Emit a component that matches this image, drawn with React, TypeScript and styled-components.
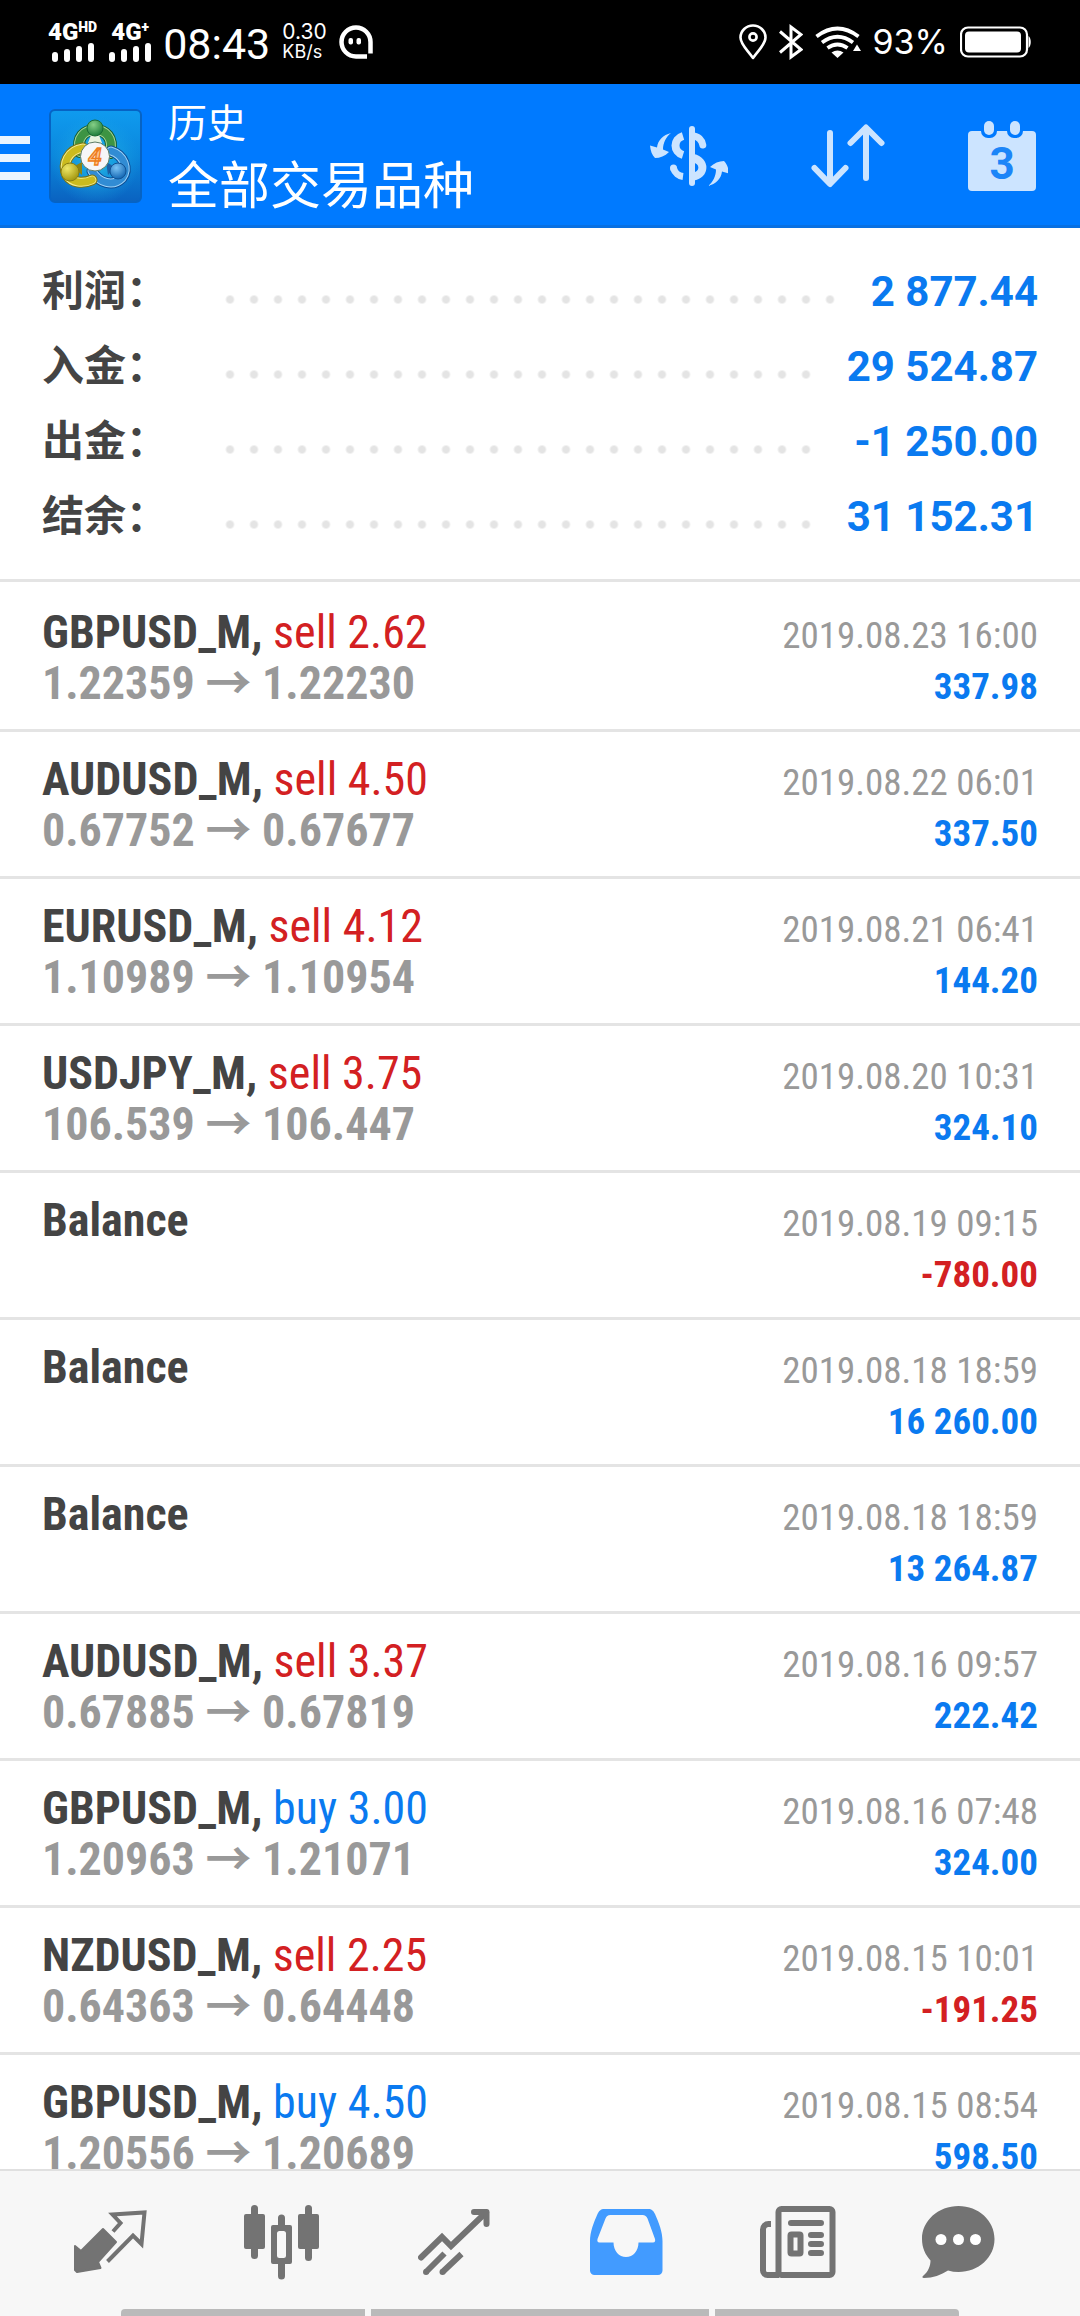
import React from "react";
import styled, { createGlobalStyle } from "styled-components";

const BLUE = "#007aff";
const VALUE_BLUE = "#0a7af0";
const RED = "#d32022";
const INK = "#444444";
const GREY = "#999999";
const RULE = "#e4e4e4";
const ICON_TINT = "#cce4ff";
const NAV_ICON = "#737373";
const ROBOTO = '"Roboto", "Noto Sans CJK SC", sans-serif';
const CONDENSED = '"Roboto Condensed", "Roboto", "Noto Sans CJK SC", sans-serif';

const GlobalStyle = createGlobalStyle`
  * { box-sizing: border-box; }
  body {
    margin: 0;
    background: #ffffff;
    color: ${INK};
    font-family: ${ROBOTO};
  }
  h1, p, dl, dt, dd, ul { margin: 0; padding: 0; font-weight: inherit; }
  ul { list-style: none; }
  button { border: 0; padding: 0; background: none; color: inherit; font: inherit; cursor: pointer; }
  svg { display: block; flex: none; }
`;

const Screen = styled.div`
  display: flex;
  flex-direction: column;
  height: 100vh;
  overflow: hidden;
`;

/* ---------- status bar ---------- */

const StatusBar = styled.div`
  display: flex;
  justify-content: space-between;
  align-items: center;
  flex: none;
  height: 84px;
  padding: 0 48px;
  background: #000000;
  color: #ffffff;
`;

const StatusGroup = styled.div`
  display: flex;
  align-items: center;
  gap: 12px;
`;

const Signal = styled.div`
  display: flex;
  flex-direction: column;
  align-items: center;
`;

const SignalLabel = styled.span`
  display: flex;
  align-items: flex-start;
  height: 20px;
  font-size: 24px;
  font-weight: 900;
  line-height: 20px;
`;

const SignalMark = styled.span`
  font-size: 14px;
  line-height: 11px;
`;

const Clock = styled.span`
  padding-top: 4px;
  font-size: 43px;
  line-height: 48px;
`;

const Speed = styled.span`
  display: flex;
  flex-direction: column;
  font-family: "Inter", ${ROBOTO};
  font-size: 18px;
  line-height: 20px;
`;

const SpeedValue = styled.span`
  font-size: 21px;
`;

const Percent = styled.span`
  font-family: "Inter", ${ROBOTO};
  font-size: 34px;
  line-height: 40px;
`;

/* ---------- header ---------- */

const Header = styled.header`
  display: flex;
  align-items: center;
  flex: none;
  height: 144px;
  padding-right: 44px;
  background: ${BLUE};
  box-shadow: inset 0 -3px 0 #0870e2;
  color: #ffffff;
`;

const MenuButton = styled.button`
  display: flex;
  flex-direction: column;
  gap: 10px;
  width: 30px;
  margin-right: 19px;
  padding-top: 4px;
`;

const MenuBar = styled.span`
  height: 8px;
  background: #ebf5ff;
`;

const Titles = styled.div`
  flex: 1;
  margin-left: 26px;
  font-family: "Noto Sans CJK SC", sans-serif;
`;

const Title = styled.h1`
  font-size: 39px;
  line-height: 51px;
`;

const Subtitle = styled.p`
  font-size: 51px;
  line-height: 72px;
`;

const Actions = styled.div`
  display: flex;
  align-items: center;
  gap: 83px;
`;

/* ---------- summary ---------- */

const Content = styled.main`
  flex: 1;
  min-height: 0;
  overflow-y: auto;
  scrollbar-width: none;
`;

const Summary = styled.dl`
  padding: 22px 42px 29px;
  border-bottom: 3px solid ${RULE};
`;

const SummaryRow = styled.div`
  display: flex;
  align-items: baseline;
  height: 75px;
  font-size: 42px;
  line-height: 75px;
`;

const SummaryLabel = styled.dt`
  width: 176px;
  font-family: "Noto Sans CJK SC", sans-serif;
  font-weight: 700;
`;

const Leader = styled.span`
  flex: 1;
  height: 13px;
  margin-right: 32px;
  background: radial-gradient(circle at center, ${RULE} 3px, transparent 5px) 0 0 / 24px 13px repeat-x;
`;

const SummaryValue = styled.dd`
  color: ${VALUE_BLUE};
  font-weight: 700;
`;

/* ---------- history list ---------- */

const Deals = styled.ul`
  padding-top: 3px;
`;

const Row = styled.li`
  height: 147px;
  padding: 21px 42px 0;
  border-bottom: 3px solid ${RULE};
  font-family: ${CONDENSED};
`;

const Line = styled.div`
  display: flex;
  align-items: baseline;
  height: 51px;
  line-height: 51px;
  white-space: pre;

  /* keeps the same baseline in lines that hold only small text */
  &::before {
    content: "\\200b";
    font-size: 48px;
  }
`;

const Symbol = styled.span`
  font-size: 46px;
  font-weight: 700;
`;

const Side = styled.span<{ $side: "buy" | "sell" }>`
  color: ${(p) => (p.$side === "buy" ? VALUE_BLUE : RED)};
  font-weight: 400;
`;

const Prices = styled.span`
  color: ${GREY};
  font-size: 46px;
  font-weight: 700;
`;

const Time = styled.time`
  margin-left: auto;
  color: ${GREY};
  font-size: 37px;
`;

const Amount = styled.span<{ $loss: boolean }>`
  margin-left: auto;
  color: ${(p) => (p.$loss ? RED : VALUE_BLUE)};
  font-size: 37px;
  font-weight: 700;
`;

/* ---------- bottom navigation ---------- */

const Nav = styled.nav`
  position: relative;
  display: grid;
  grid-template-columns: repeat(5, 43fr) 37fr;
  flex: none;
  height: 147px;
  padding: 0 48px 0 24px;
  border-top: 2px solid #e0e0e0;
  background: #f7f7f7;
`;

const Tab = styled.button<{ $active?: boolean }>`
  display: flex;
  justify-content: center;
  align-items: center;
  height: 142px;
  color: ${(p) => (p.$active ? "#429bff" : NAV_ICON)};
`;

const GestureBar = styled.div`
  position: absolute;
  right: 121px;
  bottom: 0;
  left: 121px;
  display: grid;
  grid-template-columns: 122fr 169fr 122fr;
  gap: 6px;
  height: 7px;
  border-radius: 4px 4px 0 0;
  overflow: hidden;
`;

const GestureSegment = styled.span`
  background: #bababa;
`;

/* ---------- icons ---------- */

const SignalBars = () => (
  <svg width="42" height="20" viewBox="0 0 42 20" fill="#fff">
    <rect x="0" y="10" width="6" height="10" rx="3" />
    <rect x="12" y="7" width="6" height="13" rx="3" />
    <rect x="24" y="4" width="6" height="16" rx="3" />
    <rect x="36" y="1" width="6" height="19" rx="3" />
  </svg>
);

const GhostIcon = () => (
  <svg width="34" height="34" viewBox="0 0 34 34" fill="none" stroke="#fff" strokeWidth="4.5">
    <path d="M28 31.5H17A14.5 14.5 0 1 1 31.5 17v11.5" />
    <rect x="9.5" y="13" width="4.5" height="6.5" rx="2" fill="#fff" stroke="none" />
    <rect x="17.5" y="13" width="4.5" height="6.5" rx="2" fill="#fff" stroke="none" />
  </svg>
);

const PinIcon = () => (
  <svg width="28" height="36" viewBox="0 0 28 36" fill="none" stroke="#fff" strokeWidth="2.6">
    <path d="M14 34C8.500 26 1.500 20.500 1.500 13.500A12.500 12 0 0 1 26.500 13.500C26.500 20.500 19.500 26 14 34Z" strokeLinejoin="round" />
    <circle cx="14" cy="13" r="3.6" />
  </svg>
);

const BluetoothIcon = () => (
  <svg width="24" height="36" viewBox="0 0 24 36" fill="none" stroke="#fff" strokeWidth="3">
    <path d="M1 7.500L22 25.500L12 33V3L22 10.500L1 28.500" />
  </svg>
);

const WifiIcon = () => (
  <svg width="46" height="32" viewBox="0 0 46 32" fill="none" stroke="#fff" strokeWidth="3.8">
    <path d="M1.500 10.500Q22.500-5.500 43.500 10.500" />
    <path d="M7 16.500Q22.500 5 38 16.500" />
    <path d="M12.500 22Q22.500 15 32.500 22" />
    <path d="M16.500 26.500Q22.500 22.500 28.500 26.500L22.500 32Z" fill="#fff" stroke="none" />
    <path d="M42 18.500L46 25H38Z" fill="#fff" stroke="none" />
  </svg>
);

const BatteryIcon = () => (
  <svg width="72" height="32" viewBox="0 0 72 32">
    <rect x="1" y="1.500" width="66" height="29" rx="7" fill="none" stroke="#fff" strokeWidth="2.2" />
    <rect x="5" y="5.500" width="56" height="21" rx="4" fill="#fff" />
    <path d="M68.500 10c3 2 3 10 0 12Z" fill="#fff" />
  </svg>
);

const LogoIcon = () => (
  <svg width="93" height="94" viewBox="0 0 93 94">
    <defs>
      <linearGradient id="tile" x1="0" y1="0" x2="0" y2="1">
        <stop offset="0" stopColor="#0f9bef" />
        <stop offset="0.500" stopColor="#0b87dc" />
        <stop offset="1" stopColor="#0a62c0" />
      </linearGradient>
      <radialGradient id="glow" cx="0.500" cy="0.550" r="0.500">
        <stop offset="0" stopColor="#27c3e6" stopOpacity="0.900" />
        <stop offset="1" stopColor="#1aa5e6" stopOpacity="0" />
      </radialGradient>
      <radialGradient id="green" cx="0.400" cy="0.300" r="0.700">
        <stop offset="0" stopColor="#86cf86" />
        <stop offset="1" stopColor="#1f7f3c" />
      </radialGradient>
      <radialGradient id="yellow" cx="0.350" cy="0.300" r="0.700">
        <stop offset="0" stopColor="#efe868" />
        <stop offset="1" stopColor="#a69a12" />
      </radialGradient>
      <radialGradient id="azure" cx="0.400" cy="0.300" r="0.700">
        <stop offset="0" stopColor="#7cc4f5" />
        <stop offset="1" stopColor="#1467b4" />
      </radialGradient>
    </defs>
    <rect x="1" y="1" width="91" height="92" rx="5" fill="url(#tile)" stroke="#0663c4" strokeWidth="2" />
    <rect x="2" y="2" width="89" height="90" rx="4" fill="url(#glow)" />
    <g fill="none" strokeLinecap="round">
      <path d="M31 43C27 28 36 21 46 21S65 28 61 44" stroke="#155f31" strokeWidth="12" />
      <path d="M31 43C27 28 36 21 46 21S65 28 61 44" stroke="#a9d69a" strokeWidth="10" />
      <path d="M31 43C27 28 36 21 46 21S65 28 61 44" stroke="#3d9443" strokeWidth="8" />
      <path d="M62 42C75 46 80 60 73 69C64 78 50 74 43 62" stroke="#0d4e96" strokeWidth="11" />
      <path d="M62 42C75 46 80 60 73 69C64 78 50 74 43 62" stroke="#9fd4f8" strokeWidth="9" />
      <path d="M62 42C75 46 80 60 73 69C64 78 50 74 43 62" stroke="#318cd4" strokeWidth="7" />
      <path d="M34 39C19 41 13 55 18 66C23 74 34 75 43 71" stroke="#7a7410" strokeWidth="11" />
      <path d="M34 39C19 41 13 55 18 66C23 74 34 75 43 71" stroke="#f2ec94" strokeWidth="9" />
      <path d="M34 39C19 41 13 55 18 66C23 74 34 75 43 71" stroke="#cbbb1e" strokeWidth="7" />
    </g>
    <path d="M24 58L33 53L33 66Z" fill="#8c8414" />
    <path d="M66 58L57 53L59 66Z" fill="#1d5fa4" />
    <path d="M42 26h8l3 8H39Z" fill="#e8f4e0" />
    <circle cx="46" cy="19" r="8" fill="url(#green)" stroke="#1b6b35" strokeWidth="1" />
    <circle cx="21" cy="63" r="9" fill="url(#yellow)" stroke="#877e12" strokeWidth="1" />
    <circle cx="69" cy="62" r="8" fill="url(#azure)" stroke="#115395" strokeWidth="1" />
    <circle cx="46" cy="47.500" r="14.500" fill="#f6f6f8" stroke="#5c7c66" strokeWidth="1" />
    <text x="46" y="56" textAnchor="middle" fontFamily="Roboto, sans-serif" fontSize="24" fontWeight="700" fontStyle="italic" fill="#ffc489" stroke="#ee7d1c" strokeWidth="1.300">4</text>
  </svg>
);

const CurrencyIcon = () => (
  <svg width="78" height="60" viewBox="0 0 78 60" fill="none" stroke={ICON_TINT}>
    <path d="M42 3V57" strokeWidth="6" strokeLinecap="round" />
    <path d="M33 10C23 13 23 26 33 29" strokeWidth="8" />
    <path d="M23.500 42.500C25 47 29 50 33 50.500" strokeWidth="7" />
    <circle cx="23.500" cy="42" r="3.500" fill={ICON_TINT} stroke="none" />
    <path d="M43 10C48 10 52 14 52.800 19" strokeWidth="7" strokeLinecap="round" />
    <path d="M43 32C56 35 55 49 43 50.500" strokeWidth="8" />
    <g fill={ICON_TINT} stroke="none">
      <path d="M21 7C13 9 8 14 7 21.500L0 19.500C.500 25 2 29 5 32C10 32 15 30 19 26L13 23.500C13 17 16 11 21 7Z" />
      <path d="M21 7C13 9 8 14 7 21.500L0 19.500C.500 25 2 29 5 32C10 32 15 30 19 26L13 23.500C13 17 16 11 21 7Z" transform="rotate(180 39.500 33.500)" />
    </g>
  </svg>
);

const SortIcon = () => (
  <svg width="74" height="64" viewBox="0 0 74 64" fill="none" stroke={ICON_TINT} strokeWidth="6" strokeLinecap="round" strokeLinejoin="round">
    <path d="M19 9V59M3.500 44L19 60L34.500 44" />
    <path d="M55 54V4M39.500 19L55 3.500L70.500 19" />
  </svg>
);

const CalendarIcon = () => (
  <svg width="68" height="70" viewBox="0 0 68 70">
    <rect x="0" y="10" width="68" height="60" rx="4" fill={ICON_TINT} />
    <rect x="13" y="-2" width="16" height="19" rx="7" fill={BLUE} />
    <rect x="39" y="-2" width="16" height="19" rx="7" fill={BLUE} />
    <rect x="16" y="0" width="10" height="14" rx="5" fill={ICON_TINT} />
    <rect x="42" y="0" width="10" height="14" rx="5" fill={ICON_TINT} />
    <text x="34" y="58" textAnchor="middle" fontFamily="Roboto, sans-serif" fontSize="44" fontWeight="700" fill="#1c85f8">3</text>
  </svg>
);

const QuotesIcon = () => (
  <svg width="73" height="64" viewBox="0 0 73 64">
    <path d="M29 19L42 32L24 52L26.500 58L3 62L1 60V36L7 41Z" fill="currentColor" stroke="currentColor" strokeWidth="2" strokeLinejoin="round" />
    <path d="M39 21.500L46.500 13L38.500 4.500L70.500 2.500L67.500 34L59 25.500L33.500 51.500" fill="none" stroke="currentColor" strokeWidth="4" />
  </svg>
);

const ChartIcon = () => (
  <svg width="76" height="75" viewBox="0 0 76 75" fill="currentColor">
    <rect x="0" y="9" width="21" height="35" rx="2" />
    <rect x="7" y="0" width="7" height="54" rx="3.500" />
    <rect x="54" y="9" width="21" height="35" rx="2" />
    <rect x="61" y="0" width="7" height="56" rx="3.500" />
    <path fillRule="evenodd" d="M29 20H34V13a3.500 3.500 0 0 1 7 0V20H46a2 2 0 0 1 2 2V57a2 2 0 0 1-2 2H41V71a3.500 3.500 0 0 1-7 0V59H29a2 2 0 0 1-2-2V22a2 2 0 0 1 2-2ZM35.500 26a2.500 2.500 0 0 0-2.500 2.500V50.500a2.500 2.500 0 0 0 2.500 2.500H39.500a2.500 2.500 0 0 0 2.500-2.500V28.500a2.500 2.500 0 0 0-2.500-2.500Z" />
  </svg>
);

const TradeIcon = () => (
  <svg width="72" height="66" viewBox="0 0 72 66" fill="none" stroke="currentColor" strokeWidth="6">
    <path d="M3 48.500L24 28L33 37L68 3.500" strokeLinecap="round" />
    <path d="M56 3H68.500V15" strokeLinecap="round" strokeLinejoin="round" />
    <path d="M8 63L26.500 44.500M24.500 63L43.500 45" />
    <path d="M8 63h.1M24.500 63h.1" strokeLinecap="round" />
  </svg>
);

const HistoryIcon = () => (
  <svg width="73" height="66" viewBox="0 0 73 66" fill="currentColor">
    <path fillRule="evenodd" d="M14.500 0H58C62 0 63.500 2 65 5C69 14 72.500 23 72.500 32V61.500a4.500 4.500 0 0 1-4.500 4.500H4.500a4.500 4.500 0 0 1-4.500-4.500V32C0 23 3.500 14 7.500 5C9 2 10.500 0 14.500 0ZM20.500 6C17.500 6 16.500 7.500 15.500 9.500L7.500 30C7 32 7.500 33.500 9.500 33.500H23.500C23.500 42 29 48 36 48S48.500 42 48.500 33.500H63C65 33.500 65.500 32 65 30L57.500 9.500C56.500 7.500 55 6 52.500 6Z" />
  </svg>
);

const NewsIcon = () => (
  <svg width="76" height="72" viewBox="0 0 76 72" fill="none" stroke="currentColor" strokeWidth="6">
    <rect x="18.500" y="3" width="54" height="66" rx="3" />
    <path d="M11 18H8.500a5.500 5.500 0 0 0-5.500 5.500V64.500a4.500 4.500 0 0 0 4.500 4.500H19" />
    <path d="M31 17H61M51 29H61M51 38H61M51 47H61" strokeLinecap="round" />
    <rect x="30.500" y="28.500" width="10" height="19" rx="1" />
  </svg>
);

const ChatIcon = () => (
  <svg width="73" height="72" viewBox="0 0 73 72">
    <path d="M36.500 0C56.500 0 72.500 14.500 72.500 33S56.500 66 36.500 66C33 66 29.500 65.500 26 64.500C19 69 11 72 2 72C0 72 0 70.500 1.500 69.500C6 66 8.500 60 8.500 54.500C3.500 49 0 42 0 33C0 14.500 16.500 0 36.500 0Z" fill="currentColor" />
    <circle cx="19" cy="33.500" r="5.500" fill="#fff" />
    <circle cx="36.500" cy="33.500" r="5.500" fill="#fff" />
    <circle cx="53.500" cy="33.500" r="5.500" fill="#fff" />
  </svg>
);

/* ---------- data ---------- */

const totals = [
  { label: "利润：", value: "2 877.44" },
  { label: "入金：", value: "29 524.87" },
  { label: "出金：", value: "-1 250.00" },
  { label: "结余：", value: "31 152.31" },
];

type Deal = {
  symbol?: string;
  side?: "buy" | "sell";
  volume?: string;
  open?: string;
  close?: string;
  time: string;
  amount: string;
};

const deals: Deal[] = [
  { symbol: "GBPUSD_M", side: "sell", volume: "2.62", open: "1.22359", close: "1.22230", time: "2019.08.23 16:00", amount: "337.98" },
  { symbol: "AUDUSD_M", side: "sell", volume: "4.50", open: "0.67752", close: "0.67677", time: "2019.08.22 06:01", amount: "337.50" },
  { symbol: "EURUSD_M", side: "sell", volume: "4.12", open: "1.10989", close: "1.10954", time: "2019.08.21 06:41", amount: "144.20" },
  { symbol: "USDJPY_M", side: "sell", volume: "3.75", open: "106.539", close: "106.447", time: "2019.08.20 10:31", amount: "324.10" },
  { time: "2019.08.19 09:15", amount: "-780.00" },
  { time: "2019.08.18 18:59", amount: "16 260.00" },
  { time: "2019.08.18 18:59", amount: "13 264.87" },
  { symbol: "AUDUSD_M", side: "sell", volume: "3.37", open: "0.67885", close: "0.67819", time: "2019.08.16 09:57", amount: "222.42" },
  { symbol: "GBPUSD_M", side: "buy", volume: "3.00", open: "1.20963", close: "1.21071", time: "2019.08.16 07:48", amount: "324.00" },
  { symbol: "NZDUSD_M", side: "sell", volume: "2.25", open: "0.64363", close: "0.64448", time: "2019.08.15 10:01", amount: "-191.25" },
  { symbol: "GBPUSD_M", side: "buy", volume: "4.50", open: "1.20556", close: "1.20689", time: "2019.08.15 08:54", amount: "598.50" },
];

const tabs = [
  { name: "行情", Icon: QuotesIcon },
  { name: "图表", Icon: ChartIcon },
  { name: "交易", Icon: TradeIcon },
  { name: "历史", Icon: HistoryIcon, active: true },
  { name: "新闻", Icon: NewsIcon },
  { name: "消息", Icon: ChatIcon },
];

const DealRow = ({ deal }: { deal: Deal }) => (
  <Row>
    <Line>
      {deal.side ? (
        <Symbol>
          {deal.symbol}, <Side $side={deal.side}>{deal.side} {deal.volume}</Side>
        </Symbol>
      ) : (
        <Symbol>Balance</Symbol>
      )}
      <Time>{deal.time}</Time>
    </Line>
    <Line>
      {deal.open && <Prices>{deal.open} → {deal.close}</Prices>}
      <Amount $loss={deal.amount.startsWith("-")}>{deal.amount}</Amount>
    </Line>
  </Row>
);

export default function App() {
  return (
    <>
      <GlobalStyle />
      <Screen>
        <StatusBar>
          <StatusGroup>
            <Signal>
              <SignalLabel>4G<SignalMark>HD</SignalMark></SignalLabel>
              <SignalBars />
            </Signal>
            <Signal>
              <SignalLabel>4G<SignalMark>+</SignalMark></SignalLabel>
              <SignalBars />
            </Signal>
            <Clock>08:43</Clock>
            <Speed>
              <SpeedValue>0.30</SpeedValue>
              <span>KB/s</span>
            </Speed>
            <GhostIcon />
          </StatusGroup>
          <StatusGroup>
            <PinIcon />
            <BluetoothIcon />
            <WifiIcon />
            <Percent>93%</Percent>
            <BatteryIcon />
          </StatusGroup>
        </StatusBar>

        <Header>
          <MenuButton type="button" aria-label="菜单">
            <MenuBar />
            <MenuBar />
            <MenuBar />
          </MenuButton>
          <LogoIcon />
          <Titles>
            <Title>历史</Title>
            <Subtitle>全部交易品种</Subtitle>
          </Titles>
          <Actions>
            <button type="button" aria-label="交易品种"><CurrencyIcon /></button>
            <button type="button" aria-label="排序"><SortIcon /></button>
            <button type="button" aria-label="日期"><CalendarIcon /></button>
          </Actions>
        </Header>

        <Content>
          <Summary>
            {totals.map((t) => (
              <SummaryRow key={t.label}>
                <SummaryLabel>{t.label}</SummaryLabel>
                <Leader aria-hidden="true" />
                <SummaryValue>{t.value}</SummaryValue>
              </SummaryRow>
            ))}
          </Summary>
          <Deals>
            {deals.map((d, i) => (
              <DealRow key={i} deal={d} />
            ))}
          </Deals>
        </Content>

        <Nav>
          {tabs.map(({ name, Icon, active }) => (
            <Tab key={name} type="button" aria-label={name} $active={active}>
              <Icon />
            </Tab>
          ))}
          <GestureBar aria-hidden="true">
            <GestureSegment />
            <GestureSegment />
            <GestureSegment />
          </GestureBar>
        </Nav>
      </Screen>
    </>
  );
}
